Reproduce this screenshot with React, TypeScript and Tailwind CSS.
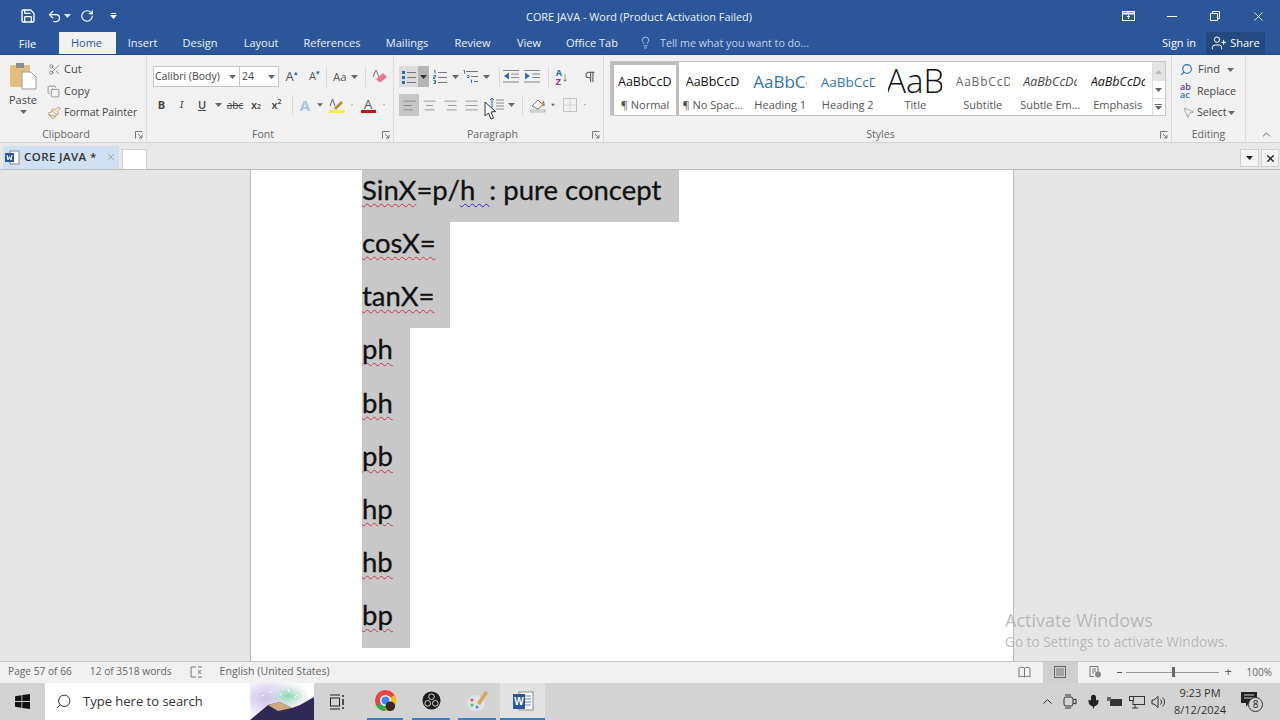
import React from "react";
import { Save, Undo2, RotateCw, Scissors, Copy, Paintbrush, AlignLeft, AlignCenter, AlignRight, AlignJustify, Pilcrow, Search, ChevronUp, Lightbulb, UserPlus, X, Mic, MousePointer2 } from "lucide-react";

const ui = { fontFamily: '"Open Sans","Noto Sans",sans-serif' };

const Caret = ({ c = "#666" }: { c?: string }) => (
  <svg width="7" height="4" viewBox="0 0 7 4"><path d="M0 0h7L3.5 4z" fill={c} /></svg>
);

const Cell = ({ w, children, className = "" }: { w: string; children?: React.ReactNode; className?: string }) => (
  <div className={`${w} h-full flex items-center justify-center shrink-0 ${className}`}>{children}</div>
);

const Sep = () => <div className="w-px h-[20px] bg-[#d8d8d8] shrink-0" />;

const Launcher = () => (
  <svg width="8" height="8" viewBox="0 0 8 8" className="shrink-0"><path d="M.5 7.5V.5h7M3 3l4 4M7 4v3H4" fill="none" stroke="#777" strokeWidth="1" /></svg>
);

const Group = ({ w, label, children, labelPad = "" }: { w: string; label: string; children: React.ReactNode; labelPad?: string }) => (
  <div className={`${w} h-full shrink-0 flex flex-col border-r border-[#dadada]`}>
    <div className="h-[72px]">{children}</div>
    <div className={`h-[15px] relative flex items-center justify-center text-[10.5px] text-[#666] ${labelPad}`}>
      {label}
      <span className="absolute right-[3px] top-[4px] flex"><Launcher /></span>
    </div>
  </div>
);

const Lines = ({ kind }: { kind: "bul" | "num" | "multi" | "dec" | "inc" | "space" }) => {
  if (kind === "bul")
    return (
      <svg width="14" height="14" viewBox="0 0 14 14"><g fill="#2b6cb0"><rect x="0" y="1" width="3" height="3" /><rect x="0" y="6" width="3" height="3" /><rect x="0" y="11" width="3" height="3" /></g><path d="M5 2.5h9M5 7.5h9M5 12.5h9" stroke="#777" /></svg>
    );
  if (kind === "num")
    return (
      <svg width="14" height="14" viewBox="0 0 14 14"><g stroke="#2b6cb0" fill="none"><path d="M1 .5h1v3M.5 5.5h2v1.5h-2v1.5h2M.5 10.5h2v3h-2M1 12h1.5" /></g><path d="M5 2.5h9M5 7.5h9M5 12.5h9" stroke="#777" /></svg>
    );
  if (kind === "multi")
    return (
      <svg width="15" height="14" viewBox="0 0 15 14"><g stroke="#2b6cb0" fill="none"><path d="M.5 .5h1v3M4 5.5h2v2h-2M7.5 10h1v3" /></g><path d="M3 1.5h12M8 6.5h7M11 11.5h4" stroke="#777" /></svg>
    );
  if (kind === "dec")
    return (
      <svg width="16" height="13" viewBox="0 0 16 13"><path d="M0 .5h16M8 4h8M8 7.500h8M0 12h16" stroke="#888" /><path d="M6 2.500v7L1 6z" fill="#2b6cb0" /></svg>
    );
  if (kind === "inc")
    return (
      <svg width="16" height="13" viewBox="0 0 16 13"><path d="M0 .5h16M8 4h8M8 7.500h8M0 12h16" stroke="#888" /><path d="M1 2.500v7L6 6z" fill="#2b6cb0" /></svg>
    );
  return (
    <svg width="15" height="16" viewBox="0 0 15 16"><path d="M7 3h8M7 6h8M7 9h8M7 12h8" stroke="#888" /><path d="M3 1v14M1 3l2-2 2 2M1 13l2 2 2-2" stroke="#2b6cb0" fill="none" /></svg>
  );
};

const Al = ({ I }: { I: typeof AlignLeft }) => <I size={15} strokeWidth={1} color="#666" />;

const StyleItem = ({ preview, label, cls, sel }: { preview: string; label: string; cls: string; sel?: boolean }) => (
  <div className={`shrink-0 h-full flex flex-col items-center overflow-hidden ${sel ? "border-[3px] border-b-0 border-[#bdbdbd] w-[68px]" : "w-[67.500px]"}`}>
    <div className={`${sel ? "h-[33px] pt-[1px]" : "h-[36px] pt-[4px]"} w-[54px] shrink-0 overflow-hidden whitespace-nowrap flex items-center justify-start ${cls}`}>{preview}</div>
    <div className="text-[11px] text-[#555] h-[14px] shrink-0 whitespace-nowrap leading-[14px]">{label}</div>
  </div>
);

const Win = () => (
  <svg width="15" height="15" viewBox="0 0 15 15" fill="#111"><path d="M0 2.200 6.500 1.200V7H0zM7.300 1.100 15 0v7H7.300zM0 8h6.500v5.800L0 12.800zM7.300 8H15v7l-7.700-1.100z" /></svg>
);

const Doc = ({ w, children, first }: { w: string; children: React.ReactNode; first?: boolean }) => (
  <div className={`${w} ${first ? "h-[52px] pb-[12.500px]" : "h-[53.200px] pb-[12px]"} shrink-0 bg-[#c8c8c8] flex items-center text-[27.500px] text-[#111] whitespace-nowrap overflow-visible [-webkit-text-stroke:0.3px_#111]`}>{children}</div>
);
const Sq = ({ children, blue }: { children: React.ReactNode; blue?: boolean }) => (
  <span className={`underline decoration-wavy decoration-1 underline-offset-[3px] [-webkit-text-stroke:0.3px_#111] ${blue ? "decoration-[#2a2ac0]" : "decoration-[#c8324a]"}`}>{children}</span>
);

export default function App() {
  return (
    <div className="w-[1280px] h-[720px] overflow-hidden flex flex-col bg-[#e6e6e6] relative" style={ui}>
      {/* title + tabs */}
      <div className="h-[55px] shrink-0 bg-[#2b579a] flex flex-col border-b border-[#234a85]">
        <div className="h-[32px] flex items-center relative text-white">
          <div className="w-[40px] flex justify-end pr-[4px]"><Save size={16} strokeWidth={2} /></div>
          <div className="w-[20px] ml-[4px] flex justify-center"><Undo2 size={15} strokeWidth={2} /></div>
          <Caret c="#dfe7f3" />
          <div className="w-[24px] ml-[4px] flex justify-center"><RotateCw size={14} strokeWidth={2} /></div>
          <div className="ml-[11px] flex flex-col items-center gap-[1px]"><div className="w-[5px] h-px bg-white" /><Caret c="#fff" /></div>
          <div className="absolute left-0 right-0 top-[9px] pr-[2px] text-center text-[10.900px] leading-[15px] text-[#eef2f8]">CORE JAVA - Word (Product Activation Failed)</div>
          <div className="ml-auto flex items-center h-full">
            <svg width="13" height="10" viewBox="0 0 13 10" className="mr-[32px]"><rect x=".5" y=".5" width="12" height="9" fill="none" stroke="#fff" /><path d="M1 2.500h11" stroke="#fff" strokeWidth="2" /><path d="M6.500 8V4.500M5 6l1.500-1.500L8 6" stroke="#fff" fill="none" /></svg>
            <div className="w-[10px] h-px bg-white mr-[33px]" />
            <svg width="10" height="10" viewBox="0 0 10 10" className="mr-[31px]"><path d="M2.500 2.500V.5h7v7h-2M.5 2.500h7v7h-7z" fill="none" stroke="#fff" /></svg>
            <X size={15} strokeWidth={1.3} className="mr-[14px]" />
          </div>
        </div>
        <div className="h-[22px] flex text-[11px] text-[#edf1f7] items-center">
          <div className="w-[55px] flex justify-center text-[11px] text-white pt-[2px]">File</div>
          <div className="w-[57px] ml-[4px] h-full bg-[#f1f1f1] text-[#2b579a] flex items-center justify-center pr-[2px]">Home</div>
          <div className="w-[53px] text-center">Insert</div>
          <div className="w-[62px] text-center">Design</div>
          <div className="w-[60px] text-center">Layout</div>
          <div className="w-[82px] text-center">References</div>
          <div className="w-[68px] text-center">Mailings</div>
          <div className="w-[63px] text-center">Review</div>
          <div className="w-[50px] text-center">View</div>
          <div className="w-[76px] text-center">Office Tab</div>
          <div className="ml-[9px] flex items-center text-[#c3d2e8]"><Lightbulb size={13} strokeWidth={1.2} color="#e8eef7" /><span className="ml-[8px] text-[10.700px]">Tell me what you want to do...</span></div>
          <div className="ml-auto mr-[10px] text-white">Sign in</div>
          <div className="w-[59px] h-full mr-[15px] bg-[#234a80] flex items-center justify-center gap-[3px] text-white"><UserPlus size={16} strokeWidth={1.5} />Share</div>
        </div>
      </div>

      {/* ribbon */}
      <div className="h-[88px] shrink-0 bg-[#f1f1f1] flex text-[11px] text-[#444] border-b border-[#d4d4d4]">
        <Group w="w-[147px]" label="Clipboard" labelPad="pr-[14px]">
          <div className="flex h-full">
            <div className="w-[46px] flex flex-col items-center pt-[7px]">
              <svg width="28" height="28" viewBox="0 0 28 28"><rect x="1" y="3" width="20" height="22" rx="1" fill="#e3bf7f" /><rect x="7" y="1" width="8" height="5" fill="#8c8c8c" /><path d="M13 10h9l5 5v12H13z" fill="#fff" stroke="#999" /></svg>
              <div className="text-[11px] text-[#444] leading-[14px] mt-[3px]">Paste</div>
              <div className="mt-[3px]"><Caret /></div>
            </div>
            <div className="flex-1 flex flex-col pt-[4px]">
              <div className="h-[21px] flex items-center"><Scissors size={13} strokeWidth={1.2} color="#666" className="ml-[2px] mr-[3px]" />Cut</div>
              <div className="h-[22px] flex items-center"><Copy size={13} strokeWidth={1.2} color="#666" className="ml-[1px] mr-[4px]" />Copy</div>
              <div className="h-[21px] flex items-center whitespace-nowrap text-[10.500px]"><Paintbrush size={14} strokeWidth={1.5} color="#b98a3c" className="ml-[1px] mr-[3px]" />Format Painter</div>
            </div>
          </div>
        </Group>
        <Group w="w-[247px]" label="Font" labelPad="pr-[14px]">
          <div className="pl-[6px] pt-[11px] flex flex-col">
            <div className="h-[21px] flex items-center">
              <div className="w-[87px] shrink-0 h-full bg-white border border-[#c6c6c6] flex items-center pl-[1px] text-[10.5px] whitespace-nowrap">Calibri (Body)<span className="ml-auto mr-[3px] flex"><Caret /></span></div>
              <div className="w-[39px] shrink-0 h-full bg-white border border-[#c6c6c6] border-l-0 flex items-center pl-[2px] text-[10.5px]">24<span className="ml-auto mr-[3px] flex"><Caret /></span></div>
              <Cell w="w-[25px]" className="text-[13px] text-[#555]">A<sup className="text-[7px] text-[#2b6cb0]">▴</sup></Cell>
              <Cell w="w-[21px]" className="text-[11px] text-[#555]">A<sup className="text-[7px] text-[#2b6cb0]">▾</sup></Cell>
              <div className="ml-[1px]"><Sep /></div>
              <Cell w="w-[38px]" className="text-[11.5px] text-[#555] gap-[4px] !justify-start pl-[6px]">Aa<Caret /></Cell>
              <Sep />
              <Cell w="w-[27px]"><svg width="16" height="15" viewBox="0 0 16 15"><path d="M1 8 4 1l3 7" fill="none" stroke="#777" /><path d="M7 13l-3-3 7-6 4 4-6 5z" fill="#e8778b" /></svg></Cell>
            </div>
            <div className="h-[22px] mt-[7px] flex items-center -ml-[1px]">
              <Cell w="w-[19px] font-bold" className="text-[11px]">B</Cell>
              <Cell w="w-[21px] italic" className="text-[11px] font-serif">I</Cell>
              <Cell w="w-[20px]" className="text-[11px] underline font-semibold">U</Cell>
              <Cell w="w-[12px]"><Caret /></Cell>
              <Cell w="w-[22px]" className="text-[10px] line-through">abc</Cell>
              <Cell w="w-[20px]" className="text-[11px] font-semibold">x<sub className="text-[7px]">2</sub></Cell>
              <Cell w="w-[21px]" className="text-[11px] font-semibold">x<sup className="text-[7px]">2</sup></Cell>
              <div className="ml-[5px]"><Sep /></div>
              <Cell w="w-[24px]" className="text-[15px] font-bold text-[#a9c4e4]">A</Cell>
              <Cell w="w-[6px]"><Caret /></Cell>
              <Cell w="w-[28px]"><svg width="16" height="15" viewBox="0 0 16 15"><path d="M5 10 12 3l2 2-7 7z" fill="#b0902f" /><path d="M1 8 3.500 1 6 8" stroke="#666" fill="none" /><rect y="12" width="16" height="3" fill="#f5ee3a" /></svg></Cell>
              <Cell w="w-[2px]"><Caret /></Cell>
              <Cell w="w-[30px]"><div className="flex flex-col items-center text-[13px] leading-[12px] text-[#555]">A<div className="w-[15px] h-[3px] bg-[#c5101e]" /></div></Cell>
              <Cell w="w-[2px]"><Caret /></Cell>
            </div>
          </div>
        </Group>
        <Group w="w-[210px]" label="Paragraph" labelPad="pr-[12px]">
          <div className="pl-[5px] pt-[11px] flex flex-col">
            <div className="h-[21px] flex items-center">
              <Cell w="w-[19px]" className="bg-[#dcdcdc]"><Lines kind="bul" /></Cell>
              <Cell w="w-[11px]" className="bg-[#b5b5b5]"><Caret c="#333" /></Cell>
              <Cell w="w-[21px]"><Lines kind="num" /></Cell>
              <Cell w="w-[10px]"><Caret /></Cell>
              <Cell w="w-[21px]"><Lines kind="multi" /></Cell>
              <Cell w="w-[10px]"><Caret /></Cell>
              <div className="ml-[8px]"><Sep /></div>
              <Cell w="w-[20px]" className="ml-[1px]"><Lines kind="dec" /></Cell>
              <Cell w="w-[21px]"><Lines kind="inc" /></Cell>
              <div className="ml-[6px]"><Sep /></div>
              <Cell w="w-[20px]" className="text-[9px] leading-[9px] ml-[3px] text-[#2b6cb0] font-bold"><span className="flex flex-col">A<span className="text-[#8a3a9c]">Z</span></span><span className="text-[#555] text-[13px]">↓</span></Cell>
              <Cell w="w-[36px]"><Pilcrow size={14} strokeWidth={2} color="#666" /></Cell>
            </div>
            <div className="h-[22px] mt-[7px] flex items-center">
              <Cell w="w-[20px]" className="bg-[#c6c6c6]"><Al I={AlignLeft} /></Cell>
              <Cell w="w-[21px]"><Al I={AlignCenter} /></Cell>
              <Cell w="w-[21px]"><Al I={AlignRight} /></Cell>
              <Cell w="w-[20px]"><Al I={AlignJustify} /></Cell>
              <Cell w="w-[4px]" />
              <Cell w="w-[22px]"><Lines kind="space" /></Cell>
              <Cell w="w-[8px]"><Caret /></Cell>
              <div className="ml-[7px]"><Sep /></div>
              <Cell w="w-[26px]" className="ml-[2px]"><svg width="16" height="15" viewBox="0 0 16 15"><path d="M2 8l6-6 5 5-5 4z" fill="#fff" stroke="#777" /><path d="M13 3l1 5" stroke="#c98a3c" strokeWidth="2" /><rect y="12" width="15" height="2" fill="#e9e9e9" stroke="#888" strokeWidth=".5" /></svg></Cell>
              <Cell w="w-[4px]"><Caret /></Cell>
              <Cell w="w-[29px]"><svg width="14" height="14" viewBox="0 0 14 14"><rect x=".5" y=".5" width="13" height="13" fill="none" stroke="#999" strokeDasharray="1 1" /><path d="M7 .5v13M.5 7h13" stroke="#bbb" strokeDasharray="1 1" /></svg></Cell>
              <Cell w="w-[2px]"><Caret /></Cell>
            </div>
          </div>
        </Group>
        <Group w="w-[568px]" label="Styles" labelPad="pr-[14px]">
          <div className="ml-[6px] mt-[6px] w-[556px] h-[55px] bg-white border border-[#c6c6c6] flex">
            <StyleItem sel preview="AaBbCcDc" label="¶ Normal" cls="text-[12.500px] text-[#111]" />
            <StyleItem preview="AaBbCcDc" label="¶ No Spac..." cls="text-[12.500px] text-[#111]" />
            <StyleItem preview="AaBbCc" label="Heading 1" cls="text-[17px] text-[#2e74b5]" />
            <StyleItem preview="AaBbCcD" label="Heading 2" cls="text-[13.500px] text-[#2e74b5]" />
            <StyleItem preview="AaB" label="Title" cls="text-[33px] font-light text-[#111] !justify-center leading-[36px] !pt-[2px]" />
            <StyleItem preview="AaBbCcD" label="Subtitle" cls="text-[12px] tracking-[0.8px] text-[#666]" />
            <StyleItem preview="AaBbCcDc" label="Subtle Em..." cls="text-[12.500px] italic text-[#444]" />
            <StyleItem preview="AaBbCcDc" label="Emphasis" cls="text-[12.500px] italic text-[#111]" />
            <div className="ml-auto w-[14px] h-full flex flex-col border-l border-[#dcdcdc]">
              <div className="h-[19px] bg-[#e4e4e4] flex items-center justify-center"><svg width="7" height="4" viewBox="0 0 7 4"><path d="M0 4h7L3.500 0z" fill="#bbb" /></svg></div>
              <div className="h-[18px] border-b border-[#dcdcdc] flex items-center justify-center"><Caret /></div>
              <div className="flex-1 flex flex-col items-center justify-center gap-[1px]"><div className="w-[7px] h-px bg-[#666]" /><Caret /></div>
            </div>
          </div>
        </Group>
        <div className="w-[74px] h-full shrink-0 flex flex-col border-r border-[#dadada]">
          <div className="h-[72px] pt-[4px] pl-[8px] flex flex-col">
            <div className="h-[21px] flex items-center"><Search size={13} strokeWidth={2} color="#2b6cb0" className="-scale-x-100 mr-[5px]" />Find<span className="ml-[7px] flex"><Caret /></span></div>
            <div className="h-[22px] flex items-center text-[10.700px]"><span className="text-[9px] leading-[8px] w-[16px] text-[#5a3a8c] font-semibold mr-[1px]">ab<br /><span className="text-[#2b6cb0]">ac</span></span>Replace</div>
            <div className="h-[21px] flex items-center text-[10.700px]"><MousePointer2 size={13} strokeWidth={1} color="#666" className="ml-[2px] mr-[2px]" />Select<span className="ml-[1px] flex"><Caret /></span></div>
          </div>
          <div className="h-[15px] text-center text-[10.5px] text-[#666] leading-[15px]">Editing</div>
        </div>
        <div className="flex-1 flex justify-center items-end pb-[1px] pl-[6px]"><ChevronUp size={13} strokeWidth={1.6} color="#555" /></div>
      </div>

      {/* document tabs */}
      <div className="h-[27px] shrink-0 bg-[#e8e8e8] flex items-end border-b border-[#bdbdbd] pl-[3px] text-[11px]">
        <div className="w-[116px] h-[23px] bg-[#cfe0f3] flex items-center pl-[2px] pb-[1px] text-[#333]">
          <svg width="15" height="15" viewBox="0 0 15 15"><rect x="5" y="1" width="9" height="13" fill="#fff" stroke="#888" /><rect y="3" width="9" height="9" fill="#2b579a" /><path d="M2 5l1 5 1.500-3.500L6 10l1-5" stroke="#fff" fill="none" /></svg>
          <span className="ml-[4px] tracking-[0.4px] whitespace-nowrap font-semibold text-[11.500px]">CORE JAVA *</span>
          <X size={12} strokeWidth={2} color="#aaa" className="ml-auto mr-[2px]" />
        </div>
        <div className="w-[25px] h-[20px] ml-[3px] bg-white border border-[#d0d0d0] border-b-0" />
        <div className="ml-auto flex gap-[2px] mb-[2px] mr-[1px]">
          <div className="w-[19px] h-[18px] bg-[#f4f4f4] border border-[#d0d0d0] flex items-center justify-center"><Caret c="#222" /></div>
          <div className="w-[18px] h-[18px] bg-[#f4f4f4] border border-[#d0d0d0] flex items-center justify-center"><X size={11} strokeWidth={3} color="#222" /></div>
        </div>
      </div>

      {/* document */}
      <div className="h-[491px] shrink-0 flex justify-start pl-[250px] overflow-hidden">
        <div className="w-[764px] h-full bg-white border-x border-[#bcbcbc] pl-[111px] flex flex-col overflow-hidden" style={{ fontFamily: 'Lato,"Open Sans",sans-serif' }}>
          <Doc first w="w-[317px]"><Sq>SinX</Sq>=p/<Sq blue>h&nbsp;&nbsp;</Sq>: pure concept</Doc>
          <Doc w="w-[88px]"><Sq>cosX=</Sq></Doc>
          <Doc w="w-[88px]"><Sq>tanX=</Sq></Doc>
          <Doc w="w-[48px]"><Sq>ph</Sq></Doc>
          <Doc w="w-[48px]"><Sq>bh</Sq></Doc>
          <Doc w="w-[48px]"><Sq>pb</Sq></Doc>
          <Doc w="w-[48px]"><Sq>hp</Sq></Doc>
          <Doc w="w-[48px]"><Sq>hb</Sq></Doc>
          <Doc w="w-[48px]"><Sq>bp</Sq></Doc>
        </div>
      </div>

      {/* status */}
      <div className="h-[22px] shrink-0 bg-[#f1f1f1] border-t border-[#c6c6c6] flex items-center pb-[1px] text-[10.200px] text-[#666]">
        <span className="ml-[8px]">Page 57 of 66</span>
        <span className="ml-[18px]">12 of 3518 words</span>
        <svg width="13" height="12" viewBox="0 0 13 12" className="ml-[18px]"><path d="M6 1H1v10h5M8 1h4M8 11h4" fill="none" stroke="#777" /><path d="M8 4l3 4M11 4 8 8" stroke="#777" /></svg>
        <span className="ml-[17px] text-[10.600px]">English (United States)</span>
        <div className="ml-auto flex items-center h-full">
          <svg width="13" height="12" viewBox="0 0 13 12" className="mr-[12px]"><path d="M6.500 2C5 1 3 1 1 2v9c2-1 4-1 5.500 0 1.500-1 3.500-1 5.500 0V2c-2-1-4-1-5.500 0zM6.500 2v9" fill="none" stroke="#777" /></svg>
          <div className="w-[35px] h-[21px] bg-[#cfcfcf] flex items-center justify-center"><svg width="12" height="12" viewBox="0 0 12 12"><rect x=".5" y=".5" width="11" height="11" fill="none" stroke="#666" /><path d="M2 3h8M2 5h8M2 7h8M2 9h8" stroke="#777" /></svg></div>
          <svg width="13" height="12" viewBox="0 0 13 12" className="ml-[11px] mr-[15px]"><path d="M1 .5h8v6M1 .5v10h4M3 3h4M3 5h4M3 7h2" fill="none" stroke="#777" /><circle cx="9" cy="8.500" r="3" fill="#888" /></svg>
          <div className="w-[5px] h-px bg-[#555]" />
          <div className="w-[93px] ml-[4px] mr-[6px] h-px bg-[#999] flex items-center justify-center"><div className="w-[3px] h-[10px] bg-[#666] ml-[3px]" /></div>
          <span className="text-[12px] text-[#555] leading-none">+</span>
          <span className="ml-[15px] mr-[8px] text-[10px]">100%</span>
        </div>
      </div>

      {/* taskbar */}
      <div className="flex-1 bg-[#d3d3d3] flex items-center text-[#222]">
        <div className="w-[45px] flex justify-center"><Win /></div>
        <div className="w-[269px] h-full bg-white flex items-center relative overflow-hidden text-[13px] text-[#333]">
          <Search size={17} strokeWidth={1.3} color="#222" className="-scale-x-100 ml-[10px] mr-[11px]" />
          Type here to search
          <svg width="64" height="37" viewBox="0 0 64 37" className="absolute right-0 top-0">
            <defs>
              <radialGradient id="g1" cx="30%" cy="40%" r="60%"><stop offset="0" stopColor="#c9b9e8" /><stop offset="1" stopColor="#fff" /></radialGradient>
              <radialGradient id="g2" cx="60%" cy="35%" r="40%"><stop offset="0" stopColor="#7fd8a8" /><stop offset="1" stopColor="#fff" stopOpacity="0" /></radialGradient>
            </defs>
            <rect width="64" height="37" fill="url(#g1)" /><rect width="64" height="37" fill="url(#g2)" />
            <path d="M0 37 18 22l12-3 12 6 8-3 14-8v23z" fill="#2e2a55" />
            <path d="M18 22l12-3 12 6-14 3z" fill="#cfa97a" />
            <path d="M12 12l2 1M20 8l1 2M30 12l2-1M38 6l1 3M45 14l2-2" stroke="#fff" />
          </svg>
        </div>
        <div className="w-[46px] flex justify-center"><svg width="16" height="16" viewBox="0 0 16 16"><path d="M1 1h10M1 15h10" stroke="#222" /><rect x="1.500" y="4" width="9" height="8" fill="none" stroke="#222" /><path d="M14 1v2M14 5v6M14 13v2" stroke="#222" strokeWidth="1.500" /></svg></div>
        <div className="w-[36px] h-full flex flex-col items-center justify-center relative border-b-2 border-[#2f80d0] ml-[7px]">
          <svg width="23" height="23" viewBox="0 0 24 24"><circle cx="12" cy="12" r="11" fill="#e8453c" /><path d="M12 12 2.500 17.500A11 11 0 0 0 12 23l5.500-6z" fill="#34a853" /><path d="M12 12l9.500-5.500A11 11 0 0 1 12 23z" fill="#fbbc05" /><circle cx="12" cy="12" r="5" fill="#4285f4" stroke="#fff" strokeWidth="1.500" /><circle cx="17" cy="18" r="5" fill="#3a2a22" /></svg>
        </div>
        <div className="w-[38px] ml-[9px] h-full flex items-center justify-center border-b-2 border-[#2f80d0]">
          <svg width="19" height="19" viewBox="0 0 20 20"><circle cx="10" cy="10" r="9.500" fill="#1c1c1c" /><circle cx="10" cy="6" r="3" fill="none" stroke="#ddd" /><circle cx="6" cy="13" r="3" fill="none" stroke="#ddd" /><circle cx="14" cy="13" r="3" fill="none" stroke="#ddd" /></svg>
        </div>
        <div className="w-[38px] ml-[8px] h-full flex items-center justify-center border-b-2 border-[#2f80d0]">
          <svg width="24" height="24" viewBox="0 0 24 24"><ellipse cx="11" cy="14" rx="9" ry="8" fill="#dfe3e6" /><path d="M12 14 20 2l3 2-8 12z" fill="#d9a45c" /><circle cx="7" cy="11" r="1.500" fill="#d9534f" /><circle cx="7" cy="16" r="1.500" fill="#5cb85c" /><circle cx="12" cy="18" r="1.500" fill="#4a90d9" /></svg>
        </div>
        <div className="w-[45px] ml-[4px] h-full flex items-center justify-center bg-[#e2e2e2] border-b-2 border-[#2f80d0]">
          <svg width="22" height="22" viewBox="0 0 22 22"><rect x="7" y="2" width="14" height="18" fill="#fff" stroke="#8a8a8a" /><path d="M11 6h8M11 9h8M11 12h8M11 15h8" stroke="#5b85c0" /><rect x="1" y="4" width="12" height="15" fill="#2b579a" /><text x="7" y="15" fontSize="10" fontWeight="700" fill="#fff" textAnchor="middle" fontFamily="Liberation Sans">W</text></svg>
        </div>
        <div className="ml-auto flex items-center h-full text-[#222]">
          <ChevronUp size={15} strokeWidth={1.5} className="mr-[8px]" />
          <svg width="14" height="15" viewBox="0 0 14 15" className="mr-[9px]"><rect x="1" y="3" width="9" height="9" rx="2" fill="none" stroke="#333" /><path d="M10 6l3-1v5l-3-1" fill="none" stroke="#333" /><path d="M2 1h6M2 14h6" stroke="#333" /></svg>
          <Mic size={15} strokeWidth={2} fill="#222" className="mr-[6px]" />
          <svg width="15" height="10" viewBox="0 0 15 10" className="mr-[7px]"><rect x="3" y="2" width="12" height="7" fill="#333" /><rect width="4" height="4" fill="#666" /></svg>
          <svg width="16" height="14" viewBox="0 0 16 14" className="mr-[6px]"><rect x="4" y="1.500" width="11.500" height="8" fill="none" stroke="#333" /><rect x=".5" y="1.500" width="4" height="4" fill="#ddd" stroke="#333" /><path d="M6 9.500V13M3 13h6" stroke="#333" /></svg>
          <svg width="15" height="14" viewBox="0 0 15 14" className="mr-[8px]"><path d="M1 5h2l4-3.500v11L3 9H1z" fill="none" stroke="#333" /><path d="M9.500 4.500a3.500 3.500 0 0 1 0 5M11.500 2.500a6 6 0 0 1 0 9" fill="none" stroke="#333" /></svg>
          <div className="w-[52px] flex flex-col items-center pb-[2px] text-[11px] leading-[17px] text-[#333]"><span>9:23 PM</span><span>8/12/2024</span></div>
          <div className="ml-[15px] mr-[21px] relative w-[18px] h-[20px]">
            <svg width="16" height="15" viewBox="0 0 16 15"><path d="M0 0h16v11h-8l-3 4v-4H0z" fill="#222" /><path d="M3 3h10M3 6h10" stroke="#d3d3d3" /></svg>
            <span className="absolute left-[7px] top-[5px] w-[15px] h-[15px] rounded-full bg-[#d3d3d3] border border-[#333] text-[10px] leading-[13px] text-center">8</span>
          </div>
        </div>
      </div>

      {/* overlays */}
      <div className="absolute left-[1005px] top-[608px] text-[#aaa]/80 pointer-events-none whitespace-nowrap">
        <div className="text-[18px] leading-[24px]">Activate Windows</div>
        <div className="text-[13.600px] leading-[20px]">Go to Settings to activate Windows.</div>
      </div>
      <svg width="13" height="19" viewBox="0 0 13 19" className="absolute left-[484px] top-[101px] pointer-events-none"><path d="M1 1v14l3.500-3 2.500 6 2.500-1-2.500-6 4.500-.5z" fill="#fff" stroke="#333" /></svg>
    </div>
  );
}
